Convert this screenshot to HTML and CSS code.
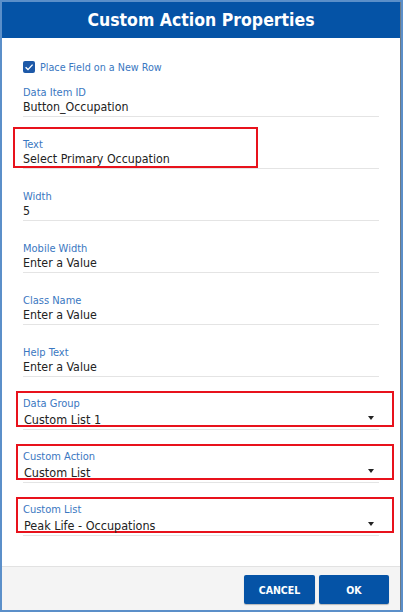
FILE: index.html
```html
<!DOCTYPE html>
<html>
<head>
<meta charset="utf-8">
<link rel="stylesheet" href="styles.css">
</head>
<body>
<div class="dialog">
  <div class="inner">
    <header class="header">Custom Action Properties</header>
    <main class="content">
      <div class="check-row">
        <span class="checkbox">
          <svg width="12" height="12" viewBox="0 0 12 12"><path d="M2.6 6.2 L5 8.6 L9.6 3.6" fill="none" stroke="#fff" stroke-width="1.4"/></svg>
        </span>
        <span class="check-label">Place Field on a New Row</span>
      </div>

      <div class="field">
        <div class="label">Data Item ID</div>
        <div class="value">Button_Occupation</div>
      </div>

      <div class="field field-hl">
        <div class="hl-box">
          <div class="label">Text</div>
          <div class="value">Select Primary Occupation</div>
        </div>
      </div>

      <div class="field">
        <div class="label">Width</div>
        <div class="value">5</div>
      </div>

      <div class="field">
        <div class="label">Mobile Width</div>
        <div class="value">Enter a Value</div>
      </div>

      <div class="field">
        <div class="label">Class Name</div>
        <div class="value">Enter a Value</div>
      </div>

      <div class="field">
        <div class="label">Help Text</div>
        <div class="value">Enter a Value</div>
      </div>

      <div class="dd">
        <div class="dd-box">
          <div class="label">Data Group</div>
          <div class="dd-row"><span class="value dd-value">Custom List 1</span><span class="caret"></span></div>
        </div>
      </div>

      <div class="dd">
        <div class="dd-box">
          <div class="label">Custom Action</div>
          <div class="dd-row"><span class="value dd-value">Custom List</span><span class="caret"></span></div>
        </div>
      </div>

      <div class="dd">
        <div class="dd-box">
          <div class="label">Custom List</div>
          <div class="dd-row"><span class="value dd-value">Peak Life - Occupations</span><span class="caret"></span></div>
        </div>
      </div>
    </main>
    <footer class="footer">
      <button class="btn btn-cancel">CANCEL</button>
      <button class="btn btn-ok">OK</button>
    </footer>
  </div>
</div>
</body>
</html>
```

FILE: styles.css
```css
html, body {
  margin: 0;
  padding: 0;
}
body {
  width: 403px;
  height: 612px;
  overflow: hidden;
  font-family: "DejaVu Sans Condensed", "DejaVu Sans", sans-serif;
  font-stretch: condensed;
  background: #fff;
}
.dialog {
  box-sizing: border-box;
  width: 403px;
  height: 612px;
  border: 2px solid #5b8fc9;
}
.inner {
  box-sizing: border-box;
  height: 100%;
  display: flex;
  flex-direction: column;
  border-right: 1px solid #6c7a88;
  background: #fff;
}
.header {
  height: 36px;
  flex: none;
  background: #0553a6;
  color: #fff;
  font-weight: bold;
  font-size: 17.5px;
  display: flex;
  align-items: center;
  justify-content: center;
  padding-bottom: 1px;
  box-sizing: border-box;
}
.content {
  flex: 1;
  padding: 22px 21px 0 21px;
  overflow: hidden;
}
.check-row {
  display: flex;
  align-items: center;
  height: 14px;
  margin-bottom: 10px;
}
.checkbox {
  width: 12px;
  height: 12px;
  border-radius: 2px;
  background: #1d59a8;
  display: flex;
  flex: none;
}
.check-label {
  margin-left: 5px;
  font-size: 10.7px;
  color: #3a77c1;
}
.label {
  font-size: 11px;
  line-height: 14px;
  color: #3a77c1;
  white-space: nowrap;
}
.value {
  font-size: 12.3px;
  line-height: 14px;
  color: #222;
  white-space: nowrap;
}
.field {
  padding: 2px 0 2px;
  border-bottom: 1px solid #e4e4e4;
}
.field + .field {
  margin-top: 19px;
}
.field-hl {
  padding-bottom: 0;
}
.hl-box {
  box-sizing: border-box;
  width: 245px;
  margin: -11px 0 0 -10px;
  padding: 9px 0 0 8px;
  border: 2px solid #e8121c;
}
.dd {
  margin-top: 14px;
  padding-bottom: 2px;
  border-bottom: 1px solid #e4e4e4;
}
.dd-box {
  box-sizing: border-box;
  height: 36px;
  margin: 0 -15px 0 -7px;
  padding: 4px 0 0 5px;
  border: 2px solid #e8121c;
}
.dd-row {
  display: flex;
  align-items: center;
  justify-content: space-between;
  margin-top: 2px;
  height: 13px;
  padding-right: 18px;
}
.dd-value {
  padding-left: 1px;
  font-size: 12.5px;
}
.caret {
  width: 0;
  height: 0;
  border-left: 3.5px solid transparent;
  border-right: 3.5px solid transparent;
  border-top: 4px solid #222;
  margin-bottom: 3px;
}
.footer {
  flex: none;
  height: 44px;
  box-sizing: border-box;
  background: #f4f4f4;
  border-top: 1px solid #e2e2e2;
  display: flex;
  justify-content: flex-end;
  align-items: flex-start;
  gap: 4px;
  padding: 8px 11px 0 0;
}
.btn {
  height: 29px;
  border: none;
  border-radius: 2px;
  background: #0553a6;
  color: #fff;
  font-family: "DejaVu Sans Condensed", "DejaVu Sans", sans-serif;
  font-stretch: condensed;
  font-weight: bold;
  font-size: 10.5px;
  padding: 0;
  box-shadow: 0 1px 1px rgba(0,0,0,0.25);
}
.btn-cancel {
  width: 71px;
}
.btn-ok {
  width: 70px;
}
```
